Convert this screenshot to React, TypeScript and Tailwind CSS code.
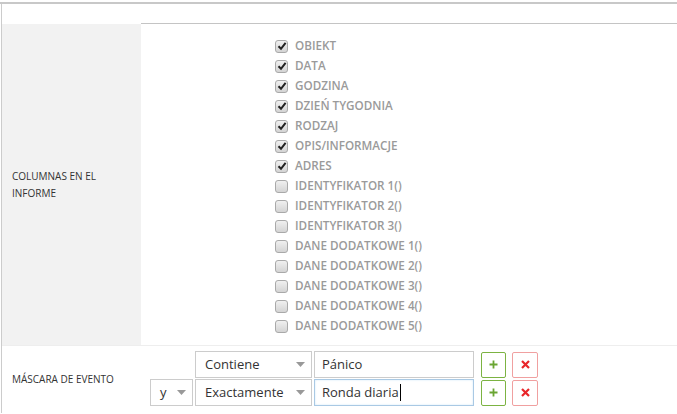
import React from "react";

const columns = [
  { label: "OBIEKT", checked: true },
  { label: "DATA", checked: true },
  { label: "GODZINA", checked: true },
  { label: "DZIEŃ TYGODNIA", checked: true },
  { label: "RODZAJ", checked: true },
  { label: "OPIS/INFORMACJE", checked: true },
  { label: "ADRES", checked: true },
  { label: "IDENTYFIKATOR 1()", checked: false },
  { label: "IDENTYFIKATOR 2()", checked: false },
  { label: "IDENTYFIKATOR 3()", checked: false },
  { label: "DANE DODATKOWE 1()", checked: false },
  { label: "DANE DODATKOWE 2()", checked: false },
  { label: "DANE DODATKOWE 3()", checked: false },
  { label: "DANE DODATKOWE 4()", checked: false },
  { label: "DANE DODATKOWE 5()", checked: false },
];

const CheckBox = ({ checked }: { checked: boolean }) => (
  <span className="relative flex h-[13px] w-[13px] items-center justify-center rounded-[3px] border border-[#a9a9a9] bg-gradient-to-b from-[#f0f0f0] to-[#d4d4d4]">
    {checked && (
      <svg width="10" height="10" viewBox="0 0 10 10">
        <path d="M1.5 5.2 L4 7.8 L8.6 1.8" fill="none" stroke="#222" strokeWidth="2" />
      </svg>
    )}
  </span>
);

const Caret = () => (
  <svg width="9" height="5" viewBox="0 0 9 5" className="shrink-0">
    <path d="M0 0 H9 L4.5 5 Z" fill="#999" />
  </svg>
);

const Select = ({ value, className }: { value: string; className: string }) => (
  <div className={"flex h-[27px] items-center justify-between border border-[#ccc] bg-white pl-[9px] pr-[6px] text-[13px] text-[#333] " + className}>
    <span>{value}</span>
    <Caret />
  </div>
);

const AddBtn = () => (
  <div className="ml-[7px] flex h-[26px] w-[25px] items-center justify-center rounded-[2px] border border-[#7cb342] bg-white">
    <svg width="9" height="9" viewBox="0 0 9 9">
      <path d="M4.5 0.5 V8.5 M0.5 4.5 H8.5" stroke="#6aa532" strokeWidth="1.8" />
    </svg>
  </div>
);

const DelBtn = () => (
  <div className="ml-[6px] flex h-[26px] w-[26px] items-center justify-center rounded-[2px] border border-[#f0a0a0] bg-white">
    <svg width="9" height="9" viewBox="0 0 9 9">
      <path d="M1 1 L8 8 M8 1 L1 8" stroke="#e8262a" strokeWidth="2.2" />
    </svg>
  </div>
);

export default function App() {
  return (
    <div className="h-[414px] w-[677px] overflow-hidden bg-white font-['Open_Sans',sans-serif]">
      <div className="mt-[2px] border-t-2 border-[#c8c8c8]">
        <div className="ml-px border-l border-[#ccc]">
          <div className="flex h-[20px]">
            <div className="w-[139px]" />
            <div className="flex-1 border-b border-[#c4c4c4]" />
          </div>

          <div className="flex border-b border-[#eee]">
            <div className="flex w-[139px] items-center bg-[#f2f2f2] pl-[10px] text-[10px] leading-[17px] text-[#333]">
              COLUMNAS EN EL
              <br />
              INFORME
            </div>
            <div className="flex-1 pl-[134px] pb-[9px] pt-[12px]">
              {columns.map((c) => (
                <div key={c.label} className="flex h-[20px] items-center gap-[7px]">
                  <CheckBox checked={c.checked} />
                  <span className="text-[11.7px] font-semibold text-[#9a9a9a]">{c.label}</span>
                </div>
              ))}
            </div>
          </div>

          <div className="flex h-[67px]">
            <div className="flex w-[139px] items-center pl-[10px] text-[10px] text-[#333]">
              MÁSCARA DE EVENTO
            </div>
            <div className="flex flex-1 flex-col gap-px pl-[9px] pt-[5px]">
              <div className="flex items-center">
                <div className="w-[45px]" />
                <Select value="Contiene" className="w-[117px]" />
                <div className="ml-[2px] flex h-[27px] w-[160px] items-center border border-[#ccc] pl-[7px] text-[13px] text-[#333]">
                  Pánico
                </div>
                <AddBtn />
                <DelBtn />
              </div>
              <div className="flex items-center">
                <Select value="y" className="w-[43px]" />
                <Select value="Exactamente" className="ml-[2px] w-[117px]" />
                <div className="ml-[2px] flex h-[27px] w-[160px] items-center border border-[#a9c9e4] pl-[7px] text-[13px] text-[#333] shadow-[inset_0_0_2px_rgba(102,175,233,0.35)]">
                  Ronda diaria
                  <span className="ml-px inline-block h-[17px] w-px bg-black" />
                </div>
                <AddBtn />
                <DelBtn />
              </div>
            </div>
          </div>
        </div>
      </div>
    </div>
  );
}
